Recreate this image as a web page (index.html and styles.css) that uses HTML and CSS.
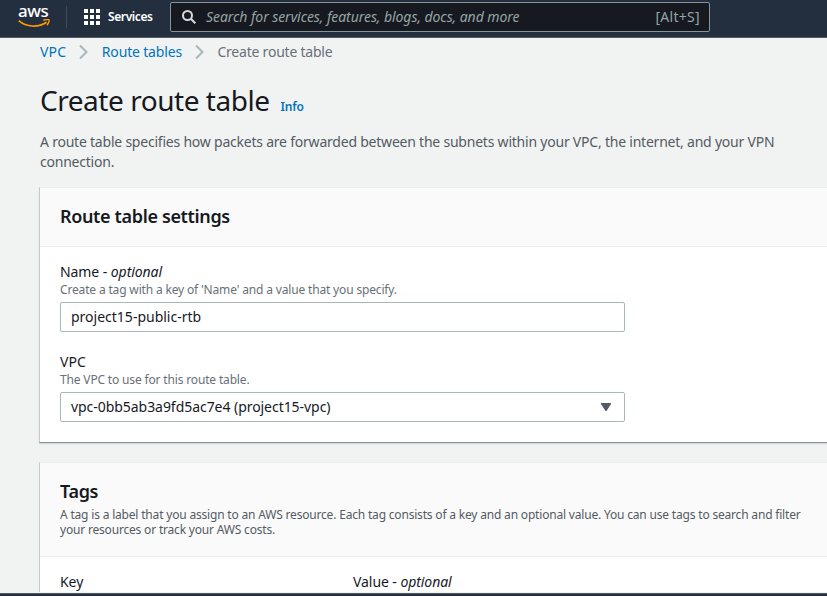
FILE: index.html
```html
<!DOCTYPE html>
<html lang="en">
<head>
<meta charset="utf-8">
<title>Create route table</title>
<link rel="stylesheet" href="styles.css">
</head>
<body>
<header class="topnav">
  <a class="logo" aria-label="aws">
    <span class="logo-word">aws</span>
    <svg class="smile" width="32" height="9" viewBox="0 0 32 9" fill="none" stroke="#f90"><path d="M.7 1.6C8.500 8.300 20 8.800 28.700 3.300" stroke-width="1.700"/><path d="M25.300 1.400C28 .3 30.700.2 31 1c.3 1.100-.6 3.600-2 5.200" stroke-width="1.400"/></svg>
  </a>
  <span class="divider"></span>
  <button class="services">
    <svg width="16" height="16" viewBox="0 0 16 16" fill="#fff"><path d="M0 0h4v4H0zM6 0h4v4H6zM12 0h4v4h-4zM0 6h4v4H0zM6 6h4v4H6zM12 6h4v4h-4zM0 12h4v4H0zM6 12h4v4H6zM12 12h4v4h-4z"/></svg>
    <span class="services-label">Services</span>
  </button>
  <div class="search">
    <svg width="14" height="14" viewBox="0 0 14 14" fill="none" stroke="#d5dbdb" stroke-width="2"><circle cx="5.500" cy="5.500" r="4.500"/><path d="M8.800 8.800l4.500 4.500"/></svg>
    <span class="placeholder">Search for services, features, blogs, docs, and more</span>
    <span class="shortcut">[Alt+S]</span>
  </div>
</header>
<main>
  <nav class="crumbs">
    <a class="crumb-vpc">VPC</a>
    <svg width="9" height="16" viewBox="0 0 9 16"><path d="M1 1.500L7.500 8 1 14.500"/></svg>
    <a class="crumb-tables">Route tables</a>
    <svg width="9" height="16" viewBox="0 0 9 16"><path d="M1 1.500L7.500 8 1 14.500"/></svg>
    <span class="current">Create route table</span>
  </nav>
  <div class="title"><h1>Create route table</h1><a class="info">Info</a></div>
  <p class="intro">A route table specifies how packets are forwarded between the subnets within your VPC, the internet, and your VPN<br>connection.</p>
  <section class="card settings">
    <div class="card-head"><h2>Route table settings</h2></div>
    <div class="card-body">
      <div class="field">
        <label>Name - <em>optional</em></label>
        <p class="hint">Create a tag with a key of 'Name' and a value that you specify.</p>
        <div class="control"><span class="value-name">project15-public-rtb</span></div>
      </div>
      <div class="field">
        <label class="label-vpc">VPC</label>
        <p class="hint">The VPC to use for this route table.</p>
        <div class="control"><span class="value-vpc">vpc-0bb5ab3a9fd5ac7e4 (project15-vpc)</span><svg width="10" height="8" viewBox="0 0 10 8"><path d="M0 0h10v1L5.500 8h-1L0 1z" fill="#545b64"/></svg></div>
      </div>
    </div>
  </section>
  <section class="card tags">
    <div class="card-head">
      <h2>Tags</h2>
      <p class="description">A tag is a label that you assign to an AWS resource. Each tag consists of a key and an optional value. You can use tags to search and filter<br>your resources or track your AWS costs.</p>
    </div>
    <div class="card-body columns"><label>Key</label><label>Value - <em>optional</em></label></div>
  </section>
</main>
<footer></footer>
</body>
</html>
```
FILE: styles.css
```css
* { box-sizing: border-box; }
body {
  margin: 0;
  height: 596px;
  overflow: hidden;
  display: flex;
  flex-direction: column;
  background: #f1f3f3;
  color: #16191f;
  font: 14px/20px "Noto Sans", sans-serif;
}
h1, h2, p { margin: 0; }
a { color: #0073bb; }
svg { display: block; flex: none; }
span, a, label, h1, h2 { white-space: nowrap; }

.topnav {
  flex: none;
  display: flex;
  align-items: flex-start;
  height: 38px;
  background: #232f3e;
  border-bottom: 1px solid #545b64;
  color: #fff;
}
.logo { display: flex; flex-direction: column; width: 48px; padding: 4px 0 0 18px; color: #fff; }
.logo-word { font: 500 17px/14px "Noto Sans", sans-serif; letter-spacing: -.5px; }
.smile { margin-top: 1px; }
.divider { width: 1px; height: 22px; margin: 6px 17px 0 18px; background: #3f4957; }
.services {
  display: flex;
  gap: 8px;
  width: 86px;
  padding: 9px 0 0;
  border: 0;
  background: none;
  color: #fff;
  font: 600 12px/16px "Noto Sans", sans-serif;
  letter-spacing: -.4px;
}
.search {
  display: flex;
  align-items: center;
  width: 540px;
  height: 30px;
  margin-top: 2px;
  padding: 0 9px 0 11px;
  border: 1px solid #879596;
  border-radius: 2px;
  background: #16191f;
  color: #95a5a6;
}
.placeholder { margin-left: 10px; font-style: italic; letter-spacing: -.065px; }
.shortcut { margin-left: auto; letter-spacing: .3px; }

main { flex: 1; min-height: 0; overflow: hidden; padding: 4px 0 0 39px; }
.crumbs { display: flex; align-items: center; height: 20px; padding-left: 1px; color: #687078; }
.crumbs svg { margin: 0 13.500px 0 13px; fill: none; stroke: #aab7b8; stroke-width: 2; }
.crumb-vpc { letter-spacing: .2px; }
.crumb-tables { letter-spacing: -.17px; }
.current { letter-spacing: -.22px; }
.title { display: flex; align-items: baseline; height: 36px; margin: 20px 0 14px 1px; }
h1 { font-size: 28px; line-height: 36px; font-weight: 400; letter-spacing: -.46px; }
.info { margin-left: 11px; font-size: 12px; font-weight: 600; letter-spacing: -.2px; }
.intro { height: 40px; margin: 0 0 15px 1px; color: #545b64; white-space: nowrap; letter-spacing: -.22px; }

.card { border-left: 1px solid #c4caca; border-top: 1px solid #eaeded; background: #fff; }
.settings { height: 256px; margin-bottom: 19px; border-bottom: 1px solid #879596; box-shadow: 0 1px 1px #d5dbdb; }
.card-head { height: 59px; padding: 17px 20px 0; background: #fafafa; border-bottom: 1px solid #eaeded; }
h2 { font-size: 18px; line-height: 22px; font-weight: 600; letter-spacing: -.35px; }
.card-body { padding: 15px 20px 0; }
.field { width: 565px; height: 90px; }
label { display: block; line-height: 20px; letter-spacing: -.07px; }
.label-vpc { letter-spacing: .1px; }
.hint { font-size: 12px; line-height: 16px; color: #687078; white-space: nowrap; letter-spacing: -.16px; }
.control {
  display: flex;
  align-items: center;
  justify-content: space-between;
  height: 30px;
  margin-top: 4px;
  padding: 0 13px 0 10px;
  border: 1px solid #aab7b8;
  border-radius: 2px;
}
.value-vpc { letter-spacing: -.05px; }
.tags .card-head { height: 94px; }
.description { font-size: 12px; line-height: 15px; margin-top: 5px; color: #545b64; white-space: nowrap; letter-spacing: -.185px; }
.columns { display: grid; grid-template-columns: 293px 1fr; }
footer { flex: none; height: 3px; background: #232f3e; border-top: 1px solid #545b64; }
```
